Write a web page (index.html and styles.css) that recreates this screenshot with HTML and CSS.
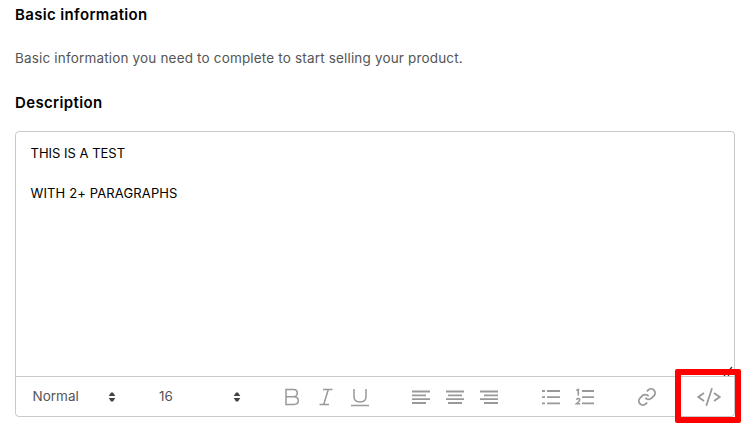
FILE: index.html
```html
<!DOCTYPE html>
<html lang="en">
<head>
<meta charset="utf-8">
<title>Basic information</title>
<link rel="stylesheet" href="styles.css">
</head>
<body>
<main class="page">
  <h2 class="heading">Basic information</h2>
  <p class="intro">Basic information you need to complete to start selling your product.</p>
  <h2 class="heading label">Description</h2>
  <section class="editor">
    <div class="content">
      <p class="line test">THIS IS A TEST</p>
      <p class="line">WITH 2+ PARAGRAPHS</p>
      <svg class="resize" width="12" height="12" viewBox="0 0 12 12"><path d="M2 12L10 3M6 12L10 7"/></svg>
    </div>
    <div class="toolbar">
      <div class="select format"><span class="normal">Normal</span><svg class="arrows" width="8" height="12" viewBox="0 0 8 12"><path d="M0.7 5L3 1.5H5L7.3 5ZM0.7 7H7.3L5 10.5H3Z"/></svg></div>
      <div class="select size"><span>16</span><svg class="arrows" width="8" height="12" viewBox="0 0 8 12"><path d="M0.7 5L3 1.5H5L7.3 5ZM0.7 7H7.3L5 10.5H3Z"/></svg></div>
      <div class="group text-style">
        <svg class="icon" viewBox="0 0 34 24"><path d="M11 4.5H18.5Q22.3 4.5 22.3 8T18.5 11.7H11ZM11 11.7H19Q23.3 11.7 23.3 15.6T19 19.5H11Z"/></svg>
        <svg class="icon" viewBox="0 0 34 24"><path d="M14 4.5H23.5M10.5 19.5H20M19.3 4.5L14.7 19.5"/></svg>
        <svg class="icon" viewBox="0 0 34 24"><path d="M11 4V11.5Q11 17 17 17T23 11.5V4M8 20.5H26"/></svg>
      </div>
      <div class="group align">
        <svg class="icon" viewBox="0 0 34 24"><path d="M8 6.5H26M8 10.3H22M8 14.2H26M8 18H22"/></svg>
        <svg class="icon" viewBox="0 0 34 24"><path d="M8 6.5H26M10 10.3H24M8 14.2H26M10 18H24"/></svg>
        <svg class="icon" viewBox="0 0 34 24"><path d="M8 6.5H26M12 10.3H26M8 14.2H26M12 18H26"/></svg>
      </div>
      <div class="group">
        <svg class="icon" viewBox="0 0 34 24"><path d="M8 6H11M13 6H26M8 12.2H11M13 12.2H26M8 18.3H11M13 18.3H26"/></svg>
        <svg class="icon" viewBox="0 0 34 24"><path d="M14 6H26M14 12.2H26M14 18.3H26"/><path class="digits" d="M8.2 5.4L10.3 4.4V10.4M8.4 14.8Q8.8 13.5 10.2 13.5Q11.9 13.5 11.7 15Q11.6 16 8.6 18.7H12.2"/></svg>
      </div>
      <div class="group">
        <svg class="icon" viewBox="0 0 34 24"><g transform="translate(7.2 2.2) scale(0.815)"><path class="chain" d="M10 13a5 5 0 0 0 7.54.54l3-3a5 5 0 0 0-7.07-7.07l-1.72 1.71M14 11a5 5 0 0 0-7.54-.54l-3 3a5 5 0 0 0 7.07 7.07l1.71-1.71"/></g></svg>
      </div>
      <div class="group">
        <svg class="icon" viewBox="0 0 34 24"><path d="M12 8L6.3 12L12 16M22 8L27.7 12L22 16M20 3.2L14.3 20.8"/></svg>
      </div>
    </div>
    <div class="highlight"></div>
  </section>
</main>
</body>
</html>
```
FILE: styles.css
```css
* { box-sizing: border-box; }
body { margin: 0; min-height: 429px; background: #fff; font-family: Inter, "Liberation Sans", sans-serif; color: #000; }
.page { min-height: 429px; padding: 5px 9px 0 15px; }
.heading { margin: 0; font-size: 15px; line-height: 20px; font-weight: 600; letter-spacing: 0.35px; }
.intro { margin: 23px 0 25px; font-size: 13.5px; line-height: 20px; letter-spacing: 0.17px; color: #555; }
.label { margin-bottom: 18px; }
.editor { position: relative; height: 286px; border: 1px solid #c9c9c9; border-radius: 4px; display: flex; flex-direction: column; }
.content { position: relative; height: 244px; padding: 11px 14.5px; }
.line { margin: 0 0 20px; font-size: 13px; line-height: 20px; letter-spacing: 0.13px; }
.test { letter-spacing: 0; }
.resize { position: absolute; right: 0; bottom: 0; fill: none; stroke: #333; stroke-width: 1.2; }
.toolbar { flex: 1; display: flex; align-items: center; border-top: 1px solid #c9c9c9; }
.select { flex: none; display: flex; align-items: center; justify-content: space-between; font-size: 13.5px; line-height: 20px; color: #555; }
.select span { padding-bottom: 1px; }
.format { width: 83.5px; margin-left: 16.5px; }
.size { width: 82px; margin: 0 34px 0 43px; }
.arrows { fill: #444; }
.group { flex: none; display: flex; margin-right: 28px; }
.group:last-child { margin-right: 0; }
.text-style { margin-right: 27px; }
.align { margin-right: 28px; }
.icon { flex: none; width: 34px; height: 24px; fill: none; stroke: #999; stroke-width: 1.8; }
.text-style .icon { stroke-width: 1.5; }
.digits { stroke-width: 1.6; }
.chain { stroke-width: 2.2; }
.highlight { position: absolute; left: 659px; top: 237px; width: 66px; height: 54px; border: 6px solid #f00; border-radius: 2px; }
```
